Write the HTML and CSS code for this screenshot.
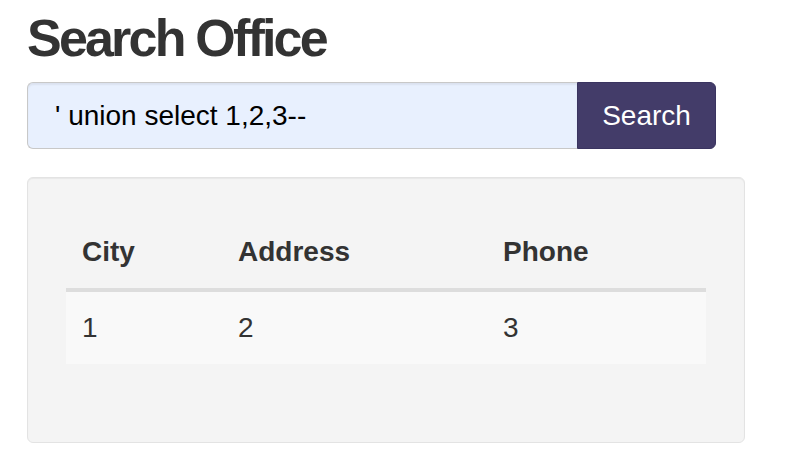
FILE: index.html
```html
<!DOCTYPE html>
<html>
<head>
<meta charset="utf-8">
<link rel="stylesheet" href="styles.css">
</head>
<body>
<div class="page">
  <h1 class="title">Search Office</h1>
  <form class="search">
    <input class="search-input" type="text" value="' union select 1,2,3--">
    <button class="search-btn" type="button">Search</button>
  </form>
  <div class="well">
    <table class="results">
      <colgroup>
        <col class="col-city">
        <col class="col-address">
        <col class="col-phone">
      </colgroup>
      <thead>
        <tr><th>City</th><th>Address</th><th>Phone</th></tr>
      </thead>
      <tbody>
        <tr><td>1</td><td>2</td><td>3</td></tr>
      </tbody>
    </table>
  </div>
</div>
</body>
</html>
```

FILE: styles.css
```css
html, body {
  margin: 0;
  padding: 0;
  background: #ffffff;
}
body {
  font-family: "Liberation Sans", Arial, Helvetica, sans-serif;
  color: #333333;
}
.page {
  width: 718px;
  padding: 0 27px;
}
.title {
  margin: 9px 0 15px;
  font-size: 52px;
  line-height: 58px;
  font-weight: 700;
  letter-spacing: -2.8px;
  color: #333333;
}
.search {
  display: flex;
  width: 689px;
  height: 67px;
  margin: 0;
}
.search-input {
  box-sizing: border-box;
  width: 550px;
  height: 67px;
  margin: 0;
  padding: 0 0 0 27px;
  border: 1px solid #c8c8c8;
  border-right: none;
  border-radius: 6px 0 0 6px;
  background: #e8f0fe;
  font-family: "Liberation Sans", Arial, sans-serif;
  font-size: 28px;
  color: #000000;
  outline: none;
  box-shadow: inset 0 2px 2px rgba(0,0,0,0.06);
}
.search-btn {
  box-sizing: border-box;
  width: 139px;
  height: 67px;
  margin: 0;
  padding: 0;
  border: 1px solid #3a3460;
  border-radius: 0 6px 6px 0;
  background: #433c69;
  color: #ffffff;
  font-family: "Liberation Sans", Arial, sans-serif;
  font-size: 28px;
}
.well {
  box-sizing: border-box;
  width: 718px;
  margin-top: 28px;
  padding: 38px;
  background: #f4f4f4;
  border: 1px solid #e3e3e3;
  border-radius: 6px;
  box-shadow: inset 0 1px 1px rgba(0,0,0,0.05);
}
.results {
  width: 640px;
  border-collapse: collapse;
  border-spacing: 0;
  margin-bottom: 40px;
  table-layout: fixed;
  font-size: 28px;
  line-height: 40px;
}
.col-city { width: 156px; }
.col-address { width: 265px; }
.col-phone { width: 219px; }
.results th,
.results td {
  padding: 16px 16px;
  text-align: left;
  vertical-align: bottom;
}
.results th {
  font-weight: 700;
  border-bottom: 4px solid #dddddd;
}
.results tbody tr {
  background: #f9f9f9;
}
```
